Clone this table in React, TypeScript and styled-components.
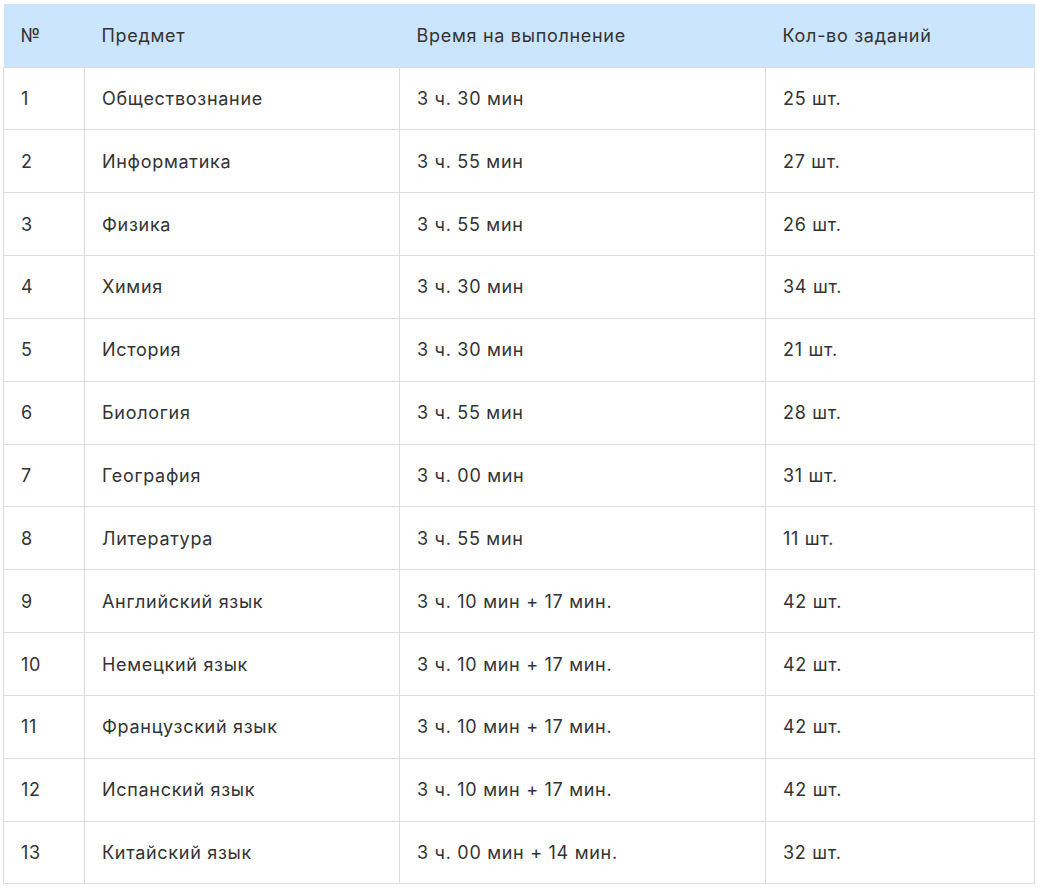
import styled, { createGlobalStyle } from "styled-components"

const GlobalStyle = createGlobalStyle`
  body {
    margin: 0;
    background: #ffffff;
    font-family: Inter, "Noto Sans", "Liberation Sans", sans-serif;
  }
`

type Row = { subject: string; time: string; count: string }

const rows: Row[] = [
  { subject: "Обществознание", time: "3 ч. 30 мин", count: "25 шт." },
  { subject: "Информатика", time: "3 ч. 55 мин", count: "27 шт." },
  { subject: "Физика", time: "3 ч. 55 мин", count: "26 шт." },
  { subject: "Химия", time: "3 ч. 30 мин", count: "34 шт." },
  { subject: "История", time: "3 ч. 30 мин", count: "21 шт." },
  { subject: "Биология", time: "3 ч. 55 мин", count: "28 шт." },
  { subject: "География", time: "3 ч. 00 мин", count: "31 шт." },
  { subject: "Литература", time: "3 ч. 55 мин", count: "11 шт." },
  { subject: "Английский язык", time: "3 ч. 10 мин + 17 мин.", count: "42 шт." },
  { subject: "Немецкий язык", time: "3 ч. 10 мин + 17 мин.", count: "42 шт." },
  { subject: "Французский язык", time: "3 ч. 10 мин + 17 мин.", count: "42 шт." },
  { subject: "Испанский язык", time: "3 ч. 10 мин + 17 мин.", count: "42 шт." },
  { subject: "Китайский язык", time: "3 ч. 00 мин + 14 мин.", count: "32 шт." },
]

export default function App() {
  return (
    <>
      <GlobalStyle />
      <Wrapper>
        <ExamTable>
          <colgroup>
            <col style={{ width: 81 }} />
            <col style={{ width: 315 }} />
            <col style={{ width: 366 }} />
            <col style={{ width: 269 }} />
          </colgroup>
          <thead>
            <tr>
              <HeadCell>№</HeadCell>
              <HeadCell>Предмет</HeadCell>
              <HeadCell>Время на выполнение</HeadCell>
              <HeadCell>Кол-во заданий</HeadCell>
            </tr>
          </thead>
          <tbody>
            {rows.map((r, i) => (
              <tr key={r.subject}>
                <Cell>{i + 1}</Cell>
                <Cell>{r.subject}</Cell>
                <Cell>{r.time}</Cell>
                <Cell>{r.count}</Cell>
              </tr>
            ))}
          </tbody>
        </ExamTable>
      </Wrapper>
    </>
  )
}

const Wrapper = styled.div`
  padding: 4px 4px 0 3px;
`

const ExamTable = styled.table`
  width: 1031px;
  border-collapse: collapse;
  table-layout: fixed;
  color: #333333;
  font-size: 18px;
  letter-spacing: 0.7px;
`

const HeadCell = styled.th`
  height: 63px;
  padding: 0 17px;
  background: #cce5ff;
  text-align: left;
  font-weight: 400;
  border: none;
  box-sizing: border-box;
`

const Cell = styled.td`
  height: 62.85px;
  padding: 0 17px;
  border: 1px solid #dddddd;
  box-sizing: border-box;
`
